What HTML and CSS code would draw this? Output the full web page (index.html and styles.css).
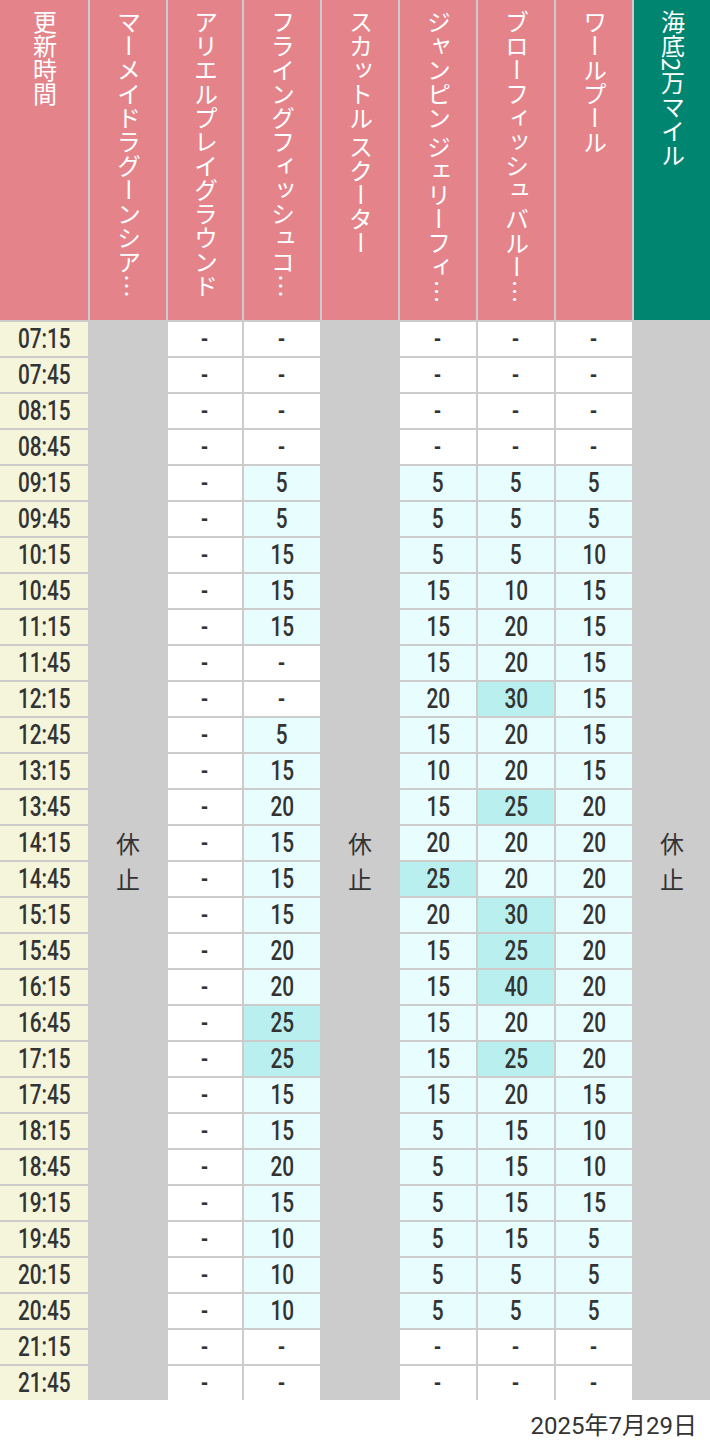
FILE: index.html
```html
<!DOCTYPE html>
<html lang="ja">
<head>
<meta charset="utf-8">
<title>待ち時間</title>
<link rel="stylesheet" href="styles.css">
</head>
<body>
<div class="board">
  <div class="hd"><span class="ht">更新時間</span></div>
  <div class="hd"><span class="ht">マーメイドラグーンシアター</span></div>
  <div class="hd"><span class="ht">アリエルプレイグラウンド</span></div>
  <div class="hd"><span class="ht">フライングフィッシュコースター</span></div>
  <div class="hd"><span class="ht">スカットル スクーター</span></div>
  <div class="hd"><span class="ht">ジャンピン ジェリーフィッシュ</span></div>
  <div class="hd"><span class="ht">ブローフィッシュ バルーンレース</span></div>
  <div class="hd"><span class="ht">ワールプール</span></div>
  <div class="hd teal"><span class="ht">海底2万マイル</span></div>

  <div class="closed c2">休<br>止</div>
  <div class="closed c5">休<br>止</div>
  <div class="closed c9">休<br>止</div>

  <div class="t"><span>07:15</span></div><div class="e"><span>-</span></div><div class="e"><span>-</span></div><div class="e"><span>-</span></div><div class="e"><span>-</span></div><div class="e"><span>-</span></div>
  <div class="t"><span>07:45</span></div><div class="e"><span>-</span></div><div class="e"><span>-</span></div><div class="e"><span>-</span></div><div class="e"><span>-</span></div><div class="e"><span>-</span></div>
  <div class="t"><span>08:15</span></div><div class="e"><span>-</span></div><div class="e"><span>-</span></div><div class="e"><span>-</span></div><div class="e"><span>-</span></div><div class="e"><span>-</span></div>
  <div class="t"><span>08:45</span></div><div class="e"><span>-</span></div><div class="e"><span>-</span></div><div class="e"><span>-</span></div><div class="e"><span>-</span></div><div class="e"><span>-</span></div>
  <div class="t"><span>09:15</span></div><div class="e"><span>-</span></div><div class="v"><span>5</span></div><div class="v"><span>5</span></div><div class="v"><span>5</span></div><div class="v"><span>5</span></div>
  <div class="t"><span>09:45</span></div><div class="e"><span>-</span></div><div class="v"><span>5</span></div><div class="v"><span>5</span></div><div class="v"><span>5</span></div><div class="v"><span>5</span></div>
  <div class="t"><span>10:15</span></div><div class="e"><span>-</span></div><div class="v"><span>15</span></div><div class="v"><span>5</span></div><div class="v"><span>5</span></div><div class="v"><span>10</span></div>
  <div class="t"><span>10:45</span></div><div class="e"><span>-</span></div><div class="v"><span>15</span></div><div class="v"><span>15</span></div><div class="v"><span>10</span></div><div class="v"><span>15</span></div>
  <div class="t"><span>11:15</span></div><div class="e"><span>-</span></div><div class="v"><span>15</span></div><div class="v"><span>15</span></div><div class="v"><span>20</span></div><div class="v"><span>15</span></div>
  <div class="t"><span>11:45</span></div><div class="e"><span>-</span></div><div class="e"><span>-</span></div><div class="v"><span>15</span></div><div class="v"><span>20</span></div><div class="v"><span>15</span></div>
  <div class="t"><span>12:15</span></div><div class="e"><span>-</span></div><div class="e"><span>-</span></div><div class="v"><span>20</span></div><div class="v h"><span>30</span></div><div class="v"><span>15</span></div>
  <div class="t"><span>12:45</span></div><div class="e"><span>-</span></div><div class="v"><span>5</span></div><div class="v"><span>15</span></div><div class="v"><span>20</span></div><div class="v"><span>15</span></div>
  <div class="t"><span>13:15</span></div><div class="e"><span>-</span></div><div class="v"><span>15</span></div><div class="v"><span>10</span></div><div class="v"><span>20</span></div><div class="v"><span>15</span></div>
  <div class="t"><span>13:45</span></div><div class="e"><span>-</span></div><div class="v"><span>20</span></div><div class="v"><span>15</span></div><div class="v h"><span>25</span></div><div class="v"><span>20</span></div>
  <div class="t"><span>14:15</span></div><div class="e"><span>-</span></div><div class="v"><span>15</span></div><div class="v"><span>20</span></div><div class="v"><span>20</span></div><div class="v"><span>20</span></div>
  <div class="t"><span>14:45</span></div><div class="e"><span>-</span></div><div class="v"><span>15</span></div><div class="v h"><span>25</span></div><div class="v"><span>20</span></div><div class="v"><span>20</span></div>
  <div class="t"><span>15:15</span></div><div class="e"><span>-</span></div><div class="v"><span>15</span></div><div class="v"><span>20</span></div><div class="v h"><span>30</span></div><div class="v"><span>20</span></div>
  <div class="t"><span>15:45</span></div><div class="e"><span>-</span></div><div class="v"><span>20</span></div><div class="v"><span>15</span></div><div class="v h"><span>25</span></div><div class="v"><span>20</span></div>
  <div class="t"><span>16:15</span></div><div class="e"><span>-</span></div><div class="v"><span>20</span></div><div class="v"><span>15</span></div><div class="v h"><span>40</span></div><div class="v"><span>20</span></div>
  <div class="t"><span>16:45</span></div><div class="e"><span>-</span></div><div class="v h"><span>25</span></div><div class="v"><span>15</span></div><div class="v"><span>20</span></div><div class="v"><span>20</span></div>
  <div class="t"><span>17:15</span></div><div class="e"><span>-</span></div><div class="v h"><span>25</span></div><div class="v"><span>15</span></div><div class="v h"><span>25</span></div><div class="v"><span>20</span></div>
  <div class="t"><span>17:45</span></div><div class="e"><span>-</span></div><div class="v"><span>15</span></div><div class="v"><span>15</span></div><div class="v"><span>20</span></div><div class="v"><span>15</span></div>
  <div class="t"><span>18:15</span></div><div class="e"><span>-</span></div><div class="v"><span>15</span></div><div class="v"><span>5</span></div><div class="v"><span>15</span></div><div class="v"><span>10</span></div>
  <div class="t"><span>18:45</span></div><div class="e"><span>-</span></div><div class="v"><span>20</span></div><div class="v"><span>5</span></div><div class="v"><span>15</span></div><div class="v"><span>10</span></div>
  <div class="t"><span>19:15</span></div><div class="e"><span>-</span></div><div class="v"><span>15</span></div><div class="v"><span>5</span></div><div class="v"><span>15</span></div><div class="v"><span>15</span></div>
  <div class="t"><span>19:45</span></div><div class="e"><span>-</span></div><div class="v"><span>10</span></div><div class="v"><span>5</span></div><div class="v"><span>15</span></div><div class="v"><span>5</span></div>
  <div class="t"><span>20:15</span></div><div class="e"><span>-</span></div><div class="v"><span>10</span></div><div class="v"><span>5</span></div><div class="v"><span>5</span></div><div class="v"><span>5</span></div>
  <div class="t"><span>20:45</span></div><div class="e"><span>-</span></div><div class="v"><span>10</span></div><div class="v"><span>5</span></div><div class="v"><span>5</span></div><div class="v"><span>5</span></div>
  <div class="t"><span>21:15</span></div><div class="e"><span>-</span></div><div class="e"><span>-</span></div><div class="e"><span>-</span></div><div class="e"><span>-</span></div><div class="e"><span>-</span></div>
  <div class="t"><span>21:45</span></div><div class="e"><span>-</span></div><div class="e"><span>-</span></div><div class="e"><span>-</span></div><div class="e"><span>-</span></div><div class="e"><span>-</span></div>
</div>
<div class="date">2025年7月29日</div>
</body>
</html>
```

FILE: styles.css
```css
html, body {
  margin: 0;
  padding: 0;
  background: #fff;
}

body {
  width: 710px;
  font-family: "Noto Sans CJK JP", "Noto Sans", sans-serif;
  color: #333;
}

.board {
  display: grid;
  grid-template-columns: 88px 76px 74px 76px 76px 76px 76px 76px 76px;
  grid-template-rows: 320px repeat(30, 34px);
  gap: 2px;
  background: #ccc;
}

.hd {
  background: #e4848a;
  display: flex;
  justify-content: center;
  align-items: flex-start;
  padding-top: 10px;
  box-sizing: border-box;
}

.hd.teal {
  background: #008571;
}

.ht {
  writing-mode: vertical-rl;
  font-family: "Noto Sans CJK JP", sans-serif;
  font-size: 24px;
  line-height: 1.2;
  color: #fff;
  white-space: nowrap;
  overflow: hidden;
  text-overflow: ellipsis;
  max-height: 298px;
}

.closed {
  grid-row: 2 / span 30;
  background: #ccc;
  display: flex;
  align-items: center;
  justify-content: center;
  text-align: center;
  font-family: "Noto Sans CJK JP", sans-serif;
  font-size: 24px;
  line-height: 36px;
  color: #333;
}

.c2 { grid-column: 2; }
.c5 { grid-column: 5; }
.c9 { grid-column: 9; }

.t, .e, .v {
  display: flex;
  align-items: center;
  justify-content: center;
  font-family: "Roboto", sans-serif;
  font-weight: 500;
  font-size: 27px;
  color: #333;
  line-height: 1;
}

.t span, .e span, .v span {
  display: inline-block;
  transform: scaleX(0.77);
}

.t {
  background: #f5f5dc;
}

.e {
  background: #fff;
}

.v {
  background: #e8fdfd;
}

.v.h {
  background: #b9efef;
}

.date {
  height: 52px;
  line-height: 52px;
  text-align: right;
  padding-right: 13px;
  font-family: "Roboto", "Noto Sans CJK JP", sans-serif;
  font-size: 24px;
  color: #333;
}
```
